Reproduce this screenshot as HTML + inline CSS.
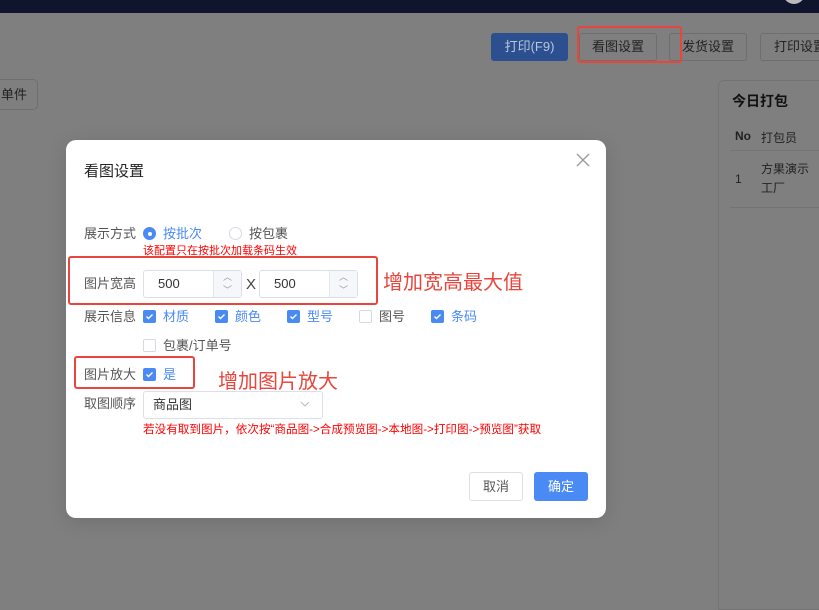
<!DOCTYPE html>
<html><head><meta charset="utf-8"><style>
*{margin:0;padding:0;box-sizing:border-box}
body{width:819px;height:603px;overflow:hidden;background:#7f7f7f;font-family:"Liberation Sans","Noto Sans CJK SC",sans-serif;position:relative;font-size:13px;color:#333}
.a{position:absolute;white-space:nowrap}
.btn{position:absolute;height:28px;border:1px solid #6e6e6e;border-radius:3px;font-size:13px;color:#222;text-align:center;line-height:26px}
.lbl{position:absolute;left:84px;font-size:13px;color:#555;line-height:16px}
.cb{position:absolute;width:13px;height:13px;border-radius:2px;background:#4a8af4}
.cb svg{display:block}
.cbo{position:absolute;width:13px;height:13px;border-radius:2px;border:1px solid #d6d9e0;background:#fff}
.ct{position:absolute;font-size:13px;line-height:16px}
.red{position:absolute;border:2px solid #e8453c;border-radius:3px}
.inp{position:absolute;height:28px;border:1px solid #dcdfe6;border-radius:3px;background:#fff}
.inp .v{position:absolute;left:14px;top:5px;font-size:13px;color:#333}
.inp .sp{position:absolute;right:0;top:0;width:28px;height:26px;border-left:1px solid #e4e6eb;background:#f5f7fa;color:#999;font-size:9px;text-align:center}
</style></head><body>
<div class="a" style="left:0;top:0;width:819px;height:13px;background:#10152e"></div>
<div class="a" style="left:783px;top:-10px;width:22px;height:14px;border-radius:0 0 11px 11px;background:#bbb"></div>
<div class="btn" style="left:-10px;top:79px;width:48px;height:31px;line-height:29px;border-radius:5px;text-align:right;padding-right:10px">单件</div>
<div class="btn" style="left:491px;top:33px;width:77px;background:#2b4f8f;border-color:#2b4f8f;color:#b9c6dc">打印(F9)</div>
<div class="btn" style="left:579px;top:33px;width:78px">看图设置</div>
<div class="btn" style="left:669px;top:33px;width:78px">发货设置</div>
<div class="btn" style="left:760px;top:33px;width:70px;text-align:left;padding-left:13px">打印设置</div>
<div class="red" style="left:577px;top:26px;width:105px;height:37px"></div>
<div class="a" style="left:718px;top:80px;width:110px;height:530px;border:1px solid #747474;border-radius:6px 0 0 0;background:#7f7f7f"></div>
<div class="a" style="left:732px;top:91px;font-size:14px;font-weight:bold;color:#111">今日打包</div>
<div class="a" style="left:735px;top:129px;font-size:12px;font-weight:bold;color:#222">No</div>
<div class="a" style="left:761px;top:129px;font-size:12px;color:#222">打包员</div>
<div class="a" style="left:730px;top:150px;width:90px;height:1px;background:#747474"></div>
<div class="a" style="left:735px;top:172px;font-size:12px;color:#222">1</div>
<div class="a" style="left:761px;top:160px;font-size:12px;color:#222">方果演示</div>
<div class="a" style="left:761px;top:179px;font-size:12px;color:#222">工厂</div>
<div class="a" style="left:730px;top:207px;width:90px;height:1px;background:#747474"></div>

<div class="a" style="left:66px;top:140px;width:540px;height:378px;background:#fff;border-radius:10px;box-shadow:0 4px 20px rgba(0,0,0,.12)"></div>
<div class="a" style="left:84px;top:160px;font-size:15px;color:#222">看图设置</div>
<svg class="a" style="left:576px;top:153px" width="14" height="14"><path d="M1 1L13 13M13 1L1 13" stroke="#999" stroke-width="1.3"/></svg>

<div class="lbl" style="top:226px">展示方式</div>
<div class="a" style="left:143px;top:227px;width:13px;height:13px;border-radius:50%;background:#4a8af4"><div style="margin:4.5px;width:4px;height:4px;border-radius:50%;background:#fff"></div></div>
<div class="ct" style="left:163px;top:226px;color:#4a8af4">按批次</div>
<div class="a" style="left:229px;top:227px;width:13px;height:13px;border-radius:50%;border:1px solid #d6d9e0"></div>
<div class="ct" style="left:249px;top:226px;color:#555">按包裹</div>
<div class="a" style="left:143px;top:242px;font-size:11px;color:#f00">该配置只在按批次加载条码生效</div>

<div class="red" style="left:68px;top:256px;width:310px;height:49px"></div>
<div class="lbl" style="top:276px">图片宽高</div>
<div class="inp" style="left:143px;top:270px;width:99px"><span class="v">500</span><div class="sp"><div style="line-height:13px">︿</div><div style="line-height:13px">﹀</div></div></div>
<div class="a" style="left:246px;top:276px;font-size:15px;color:#444">X</div>
<div class="inp" style="left:259px;top:270px;width:99px"><span class="v">500</span><div class="sp"><div style="line-height:13px">︿</div><div style="line-height:13px">﹀</div></div></div>
<div class="a" style="left:383px;top:266px;font-size:20px;color:#e8453c">增加宽高最大值</div>

<div class="lbl" style="top:309px">展示信息</div>
<div class="cb" style="left:143px;top:310px"><svg width="13" height="13"><path d="M3.5 6.5l2 2 4-4" stroke="#fff" stroke-width="1.4" fill="none"/></svg></div>
<div class="ct" style="left:163px;top:309px;color:#4a8af4">材质</div>
<div class="cb" style="left:215px;top:310px"><svg width="13" height="13"><path d="M3.5 6.5l2 2 4-4" stroke="#fff" stroke-width="1.4" fill="none"/></svg></div>
<div class="ct" style="left:235px;top:309px;color:#4a8af4">颜色</div>
<div class="cb" style="left:287px;top:310px"><svg width="13" height="13"><path d="M3.5 6.5l2 2 4-4" stroke="#fff" stroke-width="1.4" fill="none"/></svg></div>
<div class="ct" style="left:307px;top:309px;color:#4a8af4">型号</div>
<div class="cbo" style="left:359px;top:310px"></div>
<div class="ct" style="left:379px;top:309px;color:#555">图号</div>
<div class="cb" style="left:431px;top:310px"><svg width="13" height="13"><path d="M3.5 6.5l2 2 4-4" stroke="#fff" stroke-width="1.4" fill="none"/></svg></div>
<div class="ct" style="left:451px;top:309px;color:#4a8af4">条码</div>
<div class="cbo" style="left:143px;top:339px"></div>
<div class="ct" style="left:163px;top:338px;color:#555">包裹/订单号</div>

<div class="red" style="left:74px;top:356px;width:121px;height:33px"></div>
<div class="lbl" style="top:367px">图片放大</div>
<div class="cb" style="left:143px;top:368px"><svg width="13" height="13"><path d="M3.5 6.5l2 2 4-4" stroke="#fff" stroke-width="1.4" fill="none"/></svg></div>
<div class="ct" style="left:163px;top:367px;color:#4a8af4">是</div>
<div class="a" style="left:218px;top:365px;font-size:20px;color:#e8453c">增加图片放大</div>

<div class="lbl" style="top:396px">取图顺序</div>
<div class="a" style="left:143px;top:391px;width:180px;height:28px;border:1px solid #dcdfe6;border-radius:3px"></div>
<div class="ct" style="left:153px;top:397px;color:#333">商品图</div>
<svg class="a" style="left:300px;top:401px" width="10" height="6"><path d="M1 1l4 4 4-4" stroke="#bbb" fill="none"/></svg>
<div class="a" style="left:143px;top:421px;font-size:11.6px;color:#f00">若没有取到图片，依次按“商品图->合成预览图->本地图->打印图->预览图”获取</div>

<div class="a" style="left:469px;top:472px;width:54px;height:29px;border:1px solid #dcdfe6;border-radius:3px;text-align:center;line-height:27px;color:#555">取消</div>
<div class="a" style="left:534px;top:472px;width:54px;height:29px;border-radius:3px;background:#4a8af4;text-align:center;line-height:29px;color:#fff">确定</div>
</body></html>
